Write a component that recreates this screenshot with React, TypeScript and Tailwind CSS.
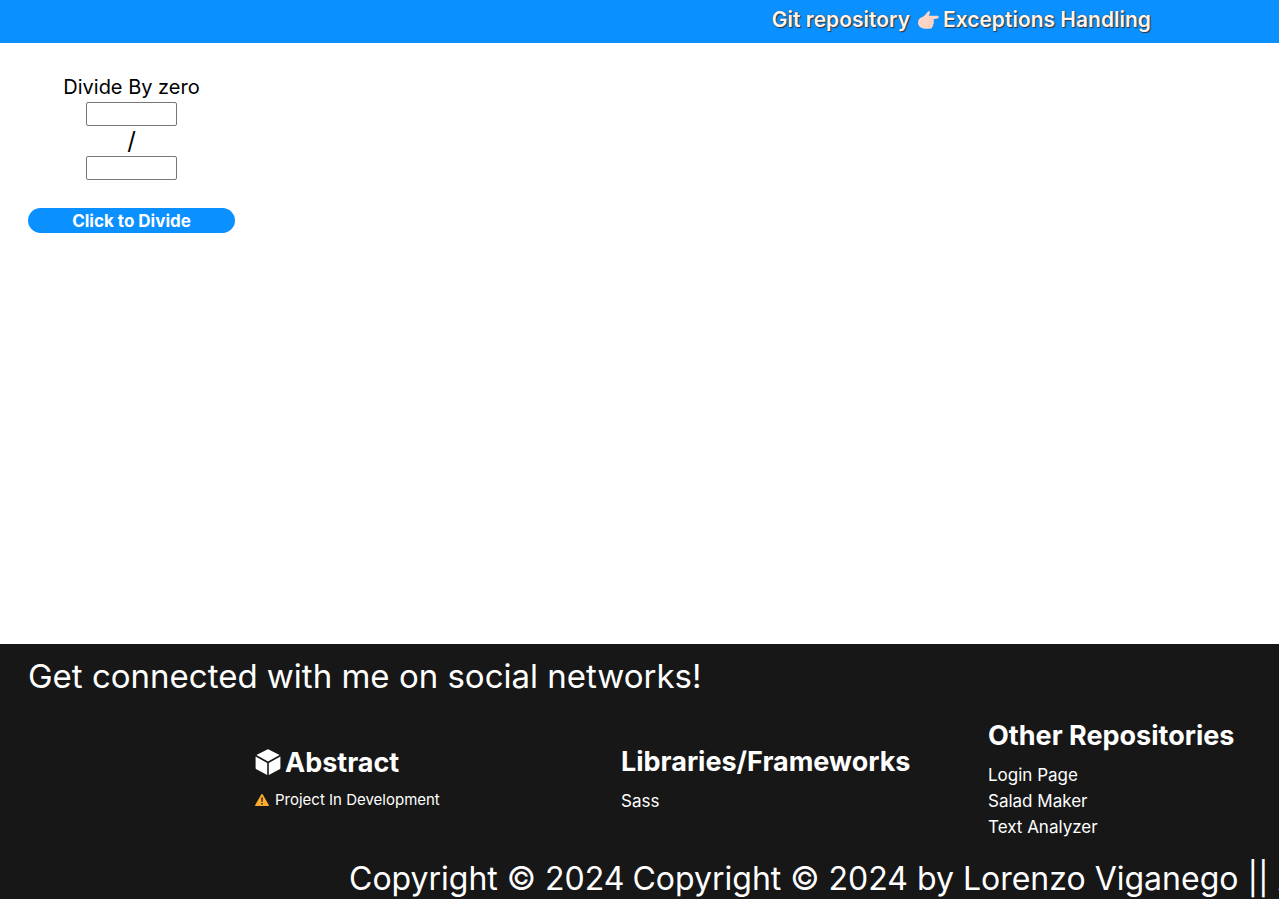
function PointingHand() {
  return (
    <svg viewBox="0 0 21 18" className="h-[18px] w-[21px] shrink-0" aria-hidden="true">
      <path
        fill="#ffd6c5"
        d="M10 0.4c1.1-.6 2.2.2 1.9 1.6L10.800 4.700H19.300c1.900 0 1.900 2.800 0 2.900L15 8.200c1.400.3 1.400 2.200.2 2.500 1.100.5.900 2.200-.4 2.500.9.700.5 2-.6 2.200.4 1.100-.2 2-1.500 2.100-2 .2-5 .4-7.200 0C2 17 0 14.800 0 11.800 0 8.700 1.800 6.800 4.400 5.900 6.800 5 8 2.700 10 .4Z"
      />
      <path d="M10.500 8.200H15M10.500 10.700h4.700M10.300 13.200h4.500M10 15.400h4.200" stroke="#f0bba9" strokeWidth=".5" fill="none" />
    </svg>
  );
}

function Cube() {
  return (
    <svg viewBox="0 0 26 26" className="size-[26px] shrink-0" fill="currentColor" aria-hidden="true">
      <path d="M12.300.4a1.500 1.500 0 0 1 1.400 0L24.600 6 13 12.400 1.400 6Z" />
      <path d="M.6 7.400 12.200 13.900V26L1.400 20.300A1.500 1.500 0 0 1 .6 19Z" />
      <path d="M25.400 7.400 13.800 13.900V26l10.800-5.700a1.500 1.500 0 0 0 .8-1.300Z" />
    </svg>
  );
}

function WarningSign() {
  return (
    <svg viewBox="0 0 14 12" className="h-3 w-3.5 shrink-0" aria-hidden="true">
      <path fill="#fcab2e" d="M6.200.5c.4-.7 1.200-.7 1.600 0l6 10.500c.3.500 0 1-.6 1H.8c-.6 0-.9-.5-.6-1Z" />
      <path fill="#3a2c18" d="M6.100 3.400h1.800L7.600 8H6.400ZM6.200 9h1.600v1.600H6.200Z" />
    </svg>
  );
}

const headingClass = "text-[27px] leading-[39px] font-bold";
const repositories = ["Login Page", "Salad Maker", "Text Analyzer"];

export default function App() {
  return (
    <div className="flex min-h-screen flex-col overflow-x-hidden bg-white font-[Inter,'Open_Sans',sans-serif] text-black">
      <header className="flex h-[43px] items-start justify-end bg-[#0a90ff] pt-[5px] pr-32">
        <a
          href="#repository"
          className="flex items-center gap-2 text-[21px] leading-[30px] font-semibold whitespace-nowrap text-[#fff5ee] [text-shadow:1px_1px_1px_#333,0_0_1px_#333]"
        >
          <span>Git repository</span>
          <span className="flex items-center gap-1">
            <PointingHand />
            Exceptions Handling
          </span>
        </a>
      </header>

      <main className="flex-1 px-7 pt-[29px]">
        <form className="flex w-[207px] flex-col items-center" onSubmit={(e) => e.preventDefault()}>
          <h1 className="text-xl leading-[30px]">Divide By zero</h1>
          <input aria-label="Dividend" className="h-6 w-[91px] rounded-xs border border-[#767676] bg-white px-1 text-sm" />
          <span className="text-2xl leading-[30px]">/</span>
          <input aria-label="Divisor" className="h-6 w-[91px] rounded-xs border border-[#767676] bg-white px-1 text-sm" />
          <button type="submit" className="mt-7 h-[25px] w-full rounded-full bg-[#0a90ff] text-[17px] leading-6 font-bold text-white">
            Click to Divide
          </button>
        </form>
      </main>

      <footer className="bg-[#171717] text-white">
        <p className="px-7 pt-2 text-[33px] leading-[48px]">Get connected with me on social networks!</p>
        <div className="grid grid-cols-[366fr_367fr_291fr] items-center pt-4 pb-[19px] pl-[255px]">
          <section>
            <h2 className={`${headingClass} flex items-center gap-1`}>
              <Cube />
              Abstract
            </h2>
            <p className="flex items-center gap-1.5 pt-1 text-[15px] leading-7">
              <WarningSign />
              Project In Development
            </p>
          </section>
          <section>
            <h2 className={headingClass}>Libraries/Frameworks</h2>
            <ul className="pt-[7px] text-[17px] leading-[26px]">
              <li>Sass</li>
            </ul>
          </section>
          <section>
            <h2 className={headingClass}>Other Repositories</h2>
            <ul className="pt-[7px] text-[17px] leading-[26px]">
              {repositories.map((name) => (
                <li key={name}>
                  <a href="#repositories">{name}</a>
                </li>
              ))}
            </ul>
          </section>
        </div>
        <div className="flex gap-2 overflow-hidden pl-[349px] text-[32px] leading-10 whitespace-nowrap">
          <span>Copyright © 2024</span>
          <span>Copyright © 2024 by Lorenzo Viganego || All rights reserved</span>
        </div>
      </footer>
    </div>
  );
}
